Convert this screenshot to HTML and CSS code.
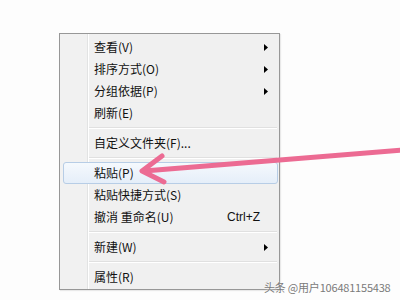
FILE: index.html
```html
<!DOCTYPE html>
<html lang="zh-CN">
<head>
<meta charset="utf-8">
<title>Context menu</title>
<link rel="stylesheet" href="styles.css">
</head>
<body>
<div class="menu">
  <div class="item"><span class="label">查看(V)</span><svg class="sub" width="4" height="7" viewBox="0 0 4 7"><path d="M0 0 L4 3.5 L0 7 Z"/></svg></div>
  <div class="item"><span class="label">排序方式(O)</span><svg class="sub" width="4" height="7" viewBox="0 0 4 7"><path d="M0 0 L4 3.5 L0 7 Z"/></svg></div>
  <div class="item"><span class="label">分组依据(P)</span><svg class="sub" width="4" height="7" viewBox="0 0 4 7"><path d="M0 0 L4 3.5 L0 7 Z"/></svg></div>
  <div class="item"><span class="label">刷新(E)</span></div>
  <div class="sep"></div>
  <div class="item"><span class="label">自定义文件夹(F)...</span></div>
  <div class="sep"></div>
  <div class="item hover"><span class="label">粘贴(P)</span></div>
  <div class="item"><span class="label">粘贴快捷方式(S)</span></div>
  <div class="item"><span class="label">撤消 重命名(U)</span><span class="shortcut">Ctrl+Z</span></div>
  <div class="sep"></div>
  <div class="item"><span class="label">新建(W)</span><svg class="sub" width="4" height="7" viewBox="0 0 4 7"><path d="M0 0 L4 3.5 L0 7 Z"/></svg></div>
  <div class="sep"></div>
  <div class="item"><span class="label">属性(R)</span></div>
</div>
<svg class="pointer" width="400" height="300" viewBox="0 0 400 300">
  <path d="M402 150 L144 171" />
  <path d="M162 156 L142 171 L164 182" />
</svg>
<div class="watermark">头条 @用户106481155438</div>
</body>
</html>
```
FILE: styles.css
```css
html, body {
  margin: 0;
  padding: 0;
  background: #fdfdfd;
  width: 400px;
  height: 300px;
  overflow: hidden;
  position: relative;
  font-family: "Noto Sans CJK SC", "Liberation Sans", sans-serif;
  font-size: 12px;
  color: #111;
}

.menu {
  margin: 33px 0 0 59px;
  width: 215px;
  padding: 2px 1px 1px 3px;
  border: 1px solid #979797;
  background:
    linear-gradient(to right,
      #f1f1f1 0, #f1f1f1 27px,
      #e2e3e3 27px, #e2e3e3 28px,
      #ffffff 28px, #ffffff 29px,
      #f0f0f0 29px, #f0f0f0 100%);
  box-shadow: 1px 1px 1px rgba(0,0,0,0.08);
}

.item {
  height: 22px;
  display: flex;
  align-items: center;
  padding-left: 31px;
  box-sizing: border-box;
  border: 1px solid transparent;
  border-radius: 3px;
}

.item .label {
  flex: 1;
  margin-left: -1px;
  line-height: 20px;
}

.item .sub {
  margin-right: 9px;
  fill: #000;
}

.item .shortcut {
  font-family: "Liberation Sans", "Noto Sans", sans-serif;
  font-size: 12px;
  margin-right: 17px;
}

.item.hover {
  border-color: #b7cde6;
  background: linear-gradient(to bottom, #f5f9fd, #e5eef9);
}

.sep {
  height: 8px;
  position: relative;
}

.sep::before {
  content: "";
  position: absolute;
  left: 26px;
  right: 1px;
  top: 3px;
  height: 1px;
  background: #e0e0e0;
  border-bottom: 1px solid #ffffff;
}

.pointer {
  position: absolute;
  left: 0;
  top: 0;
  pointer-events: none;
  fill: none;
  stroke: #ec6b93;
  stroke-width: 5;
  stroke-linecap: round;
  stroke-linejoin: round;
}

.watermark {
  position: absolute;
  left: 264px;
  top: 279px;
  font-size: 11px;
  color: #7a7a7a;
  white-space: nowrap;
  text-shadow: 0 0 2px #ffffff;
  letter-spacing: -0.2px;
}
```
